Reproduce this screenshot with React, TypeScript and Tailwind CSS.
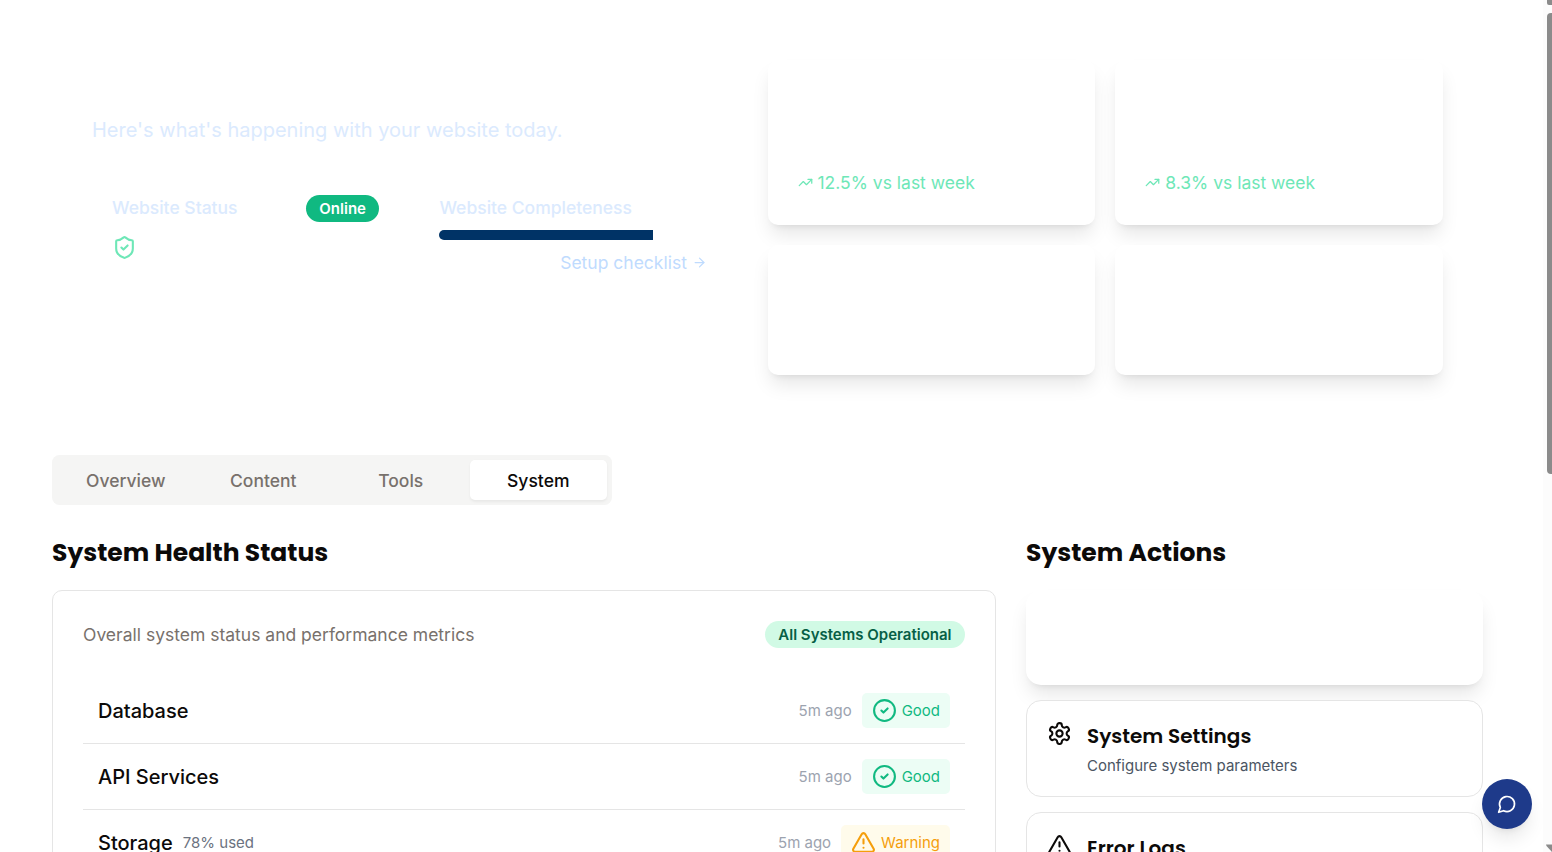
import React from "react";
import {
  ArrowRight,
  CircleCheck,
  ShieldCheck,
  TrendingUp,
  TriangleAlert,
} from "lucide-react";

const tabs = ["Overview", "Content", "Tools", "System"];

const stats = [
  { id: "a", trend: "12.5% vs last week" },
  { id: "b", trend: "8.3% vs last week" },
  { id: "c", trend: null },
  { id: "d", trend: null },
];

const services = [
  { name: "Database", note: "", ok: true },
  { name: "API Services", note: "", ok: true },
  { name: "Storage", note: "78% used", ok: false },
];

const display = "font-['Poppins','Inter',sans-serif]";

function GearIcon() {
  return (
    <svg
      className="size-[25px] shrink-0 text-[#0c0a09]"
      viewBox="0 0 24 24"
      fill="none"
      stroke="currentColor"
      strokeWidth="2"
      strokeLinecap="round"
      strokeLinejoin="round"
    >
      <path d="M12.22 2h-.44a2 2 0 0 0-2 2v.18a2 2 0 0 1-1 1.73l-.43.25a2 2 0 0 1-2 0l-.15-.08a2 2 0 0 0-2.73.73l-.22.38a2 2 0 0 0 .73 2.73l.15.1a2 2 0 0 1 1 1.72v.51a2 2 0 0 1-1 1.74l-.15.09a2 2 0 0 0-.73 2.73l.22.38a2 2 0 0 0 2.73.73l.15-.08a2 2 0 0 1 2 0l.43.25a2 2 0 0 1 1 1.73V20a2 2 0 0 0 2 2h.44a2 2 0 0 0 2-2v-.18a2 2 0 0 1 1-1.73l.43-.25a2 2 0 0 1 2 0l.15.08a2 2 0 0 0 2.73-.73l.22-.39a2 2 0 0 0-.73-2.73l-.15-.08a2 2 0 0 1-1-1.74v-.5a2 2 0 0 1 1-1.74l.15-.09a2 2 0 0 0 .73-2.73l-.22-.38a2 2 0 0 0-2.73-.73l-.15.08a2 2 0 0 1-2 0l-.43-.25a2 2 0 0 1-1-1.73V4a2 2 0 0 0-2-2z" />
      <circle cx="12" cy="12" r="3" />
    </svg>
  );
}

function ChatIcon() {
  return (
    <svg
      className="size-5"
      viewBox="0 0 24 24"
      fill="none"
      stroke="currentColor"
      strokeWidth="2"
      strokeLinecap="round"
      strokeLinejoin="round"
    >
      <path d="M7.9 20A9 9 0 1 0 4 16.1L2 22Z" />
    </svg>
  );
}

function Hero() {
  return (
    <section className="flex h-[395px] px-10 pt-10">
      <div className="w-1/2 pr-[40.6px] pt-[55px]">
        <p className="text-[20px] leading-[30px] text-[#dbeafe]">
          Here's what's happening with your website today.
        </p>
        <div className="mt-[30px] grid grid-cols-2 gap-5">
          <div className="p-5">
            <div className="flex items-start justify-between">
              <span className="text-[17.5px] font-medium leading-[25px] text-[#dbeafe]">
                Website Status
              </span>
              <span className="rounded-full bg-[#10b981] px-[13.5px] py-[3.5px] text-[15px] font-semibold leading-5 text-white">
                Online
              </span>
            </div>
            <ShieldCheck className="mt-[13px] size-[25px] text-[#6ee7b7]" />
          </div>
          <div className="p-5">
            <div className="text-[17.5px] font-medium leading-[25px] text-[#dbeafe]">
              Website Completeness
            </div>
            <div className="mt-[10px] h-[10px] overflow-hidden rounded-full">
              <div className="h-full w-4/5 bg-[#003366]" />
            </div>
            <div className="mt-[10px] flex items-center justify-end gap-[5px] text-[17.5px] leading-[25px] text-[#bfdbfe]">
              Setup checklist
              <ArrowRight className="size-[15px]" />
            </div>
          </div>
        </div>
      </div>
      <div className="grid w-1/2 grid-cols-2 grid-rows-[165px_130px] gap-5">
        {stats.map((s) => (
          <div
            key={s.id}
            className="flex flex-col justify-end rounded-[10px] bg-white p-[30px] shadow-[0_12.5px_18.75px_-3.75px_rgba(0,0,0,0.1),0_5px_7.5px_-5px_rgba(0,0,0,0.1)]"
          >
            {s.trend && (
              <div className="flex items-center gap-[5px] text-[17.5px] leading-[25px] text-[#6ee7b7]">
                <TrendingUp className="size-[15px]" />
                {s.trend}
              </div>
            )}
          </div>
        ))}
      </div>
    </section>
  );
}

function Tabs() {
  return (
    <div className="mt-10 grid h-[50px] w-[560px] grid-cols-4 rounded-[7.5px] bg-[#f5f5f4] p-[5px]">
      {tabs.map((t) => (
        <button
          key={t}
          className={
            t === "System"
              ? "rounded-[5px] bg-white text-[17.5px] font-medium leading-[25px] text-[#0c0a09] shadow-[0_1.25px_2.5px_rgba(0,0,0,0.05)]"
              : "rounded-[5px] text-[17.5px] font-medium leading-[25px] text-[#78716c]"
          }
        >
          {t}
        </button>
      ))}
    </div>
  );
}

function StatusPill({ ok }: { ok: boolean }) {
  const Icon = ok ? CircleCheck : TriangleAlert;
  return (
    <span
      className={
        ok
          ? "flex items-center gap-[5px] rounded-[5px] bg-[#ecfdf5] px-[10px] py-[5px] text-[#10b981]"
          : "flex items-center gap-[5px] rounded-[5px] bg-[#fffbeb] px-[10px] py-[5px] text-[#f59e0b]"
      }
    >
      <Icon className="size-[25px]" />
      <span className="text-[15px] leading-5">{ok ? "Good" : "Warning"}</span>
    </span>
  );
}

function Health() {
  return (
    <section className="col-span-2">
      <h2 className={`${display} mb-5 text-[25px] font-bold leading-[35px] text-[#0c0a09]`}>
        System Health Status
      </h2>
      <div className="rounded-[10px] border border-[#e5e5e5] bg-white p-[30px]">
        <div className="mb-[30px] flex h-[27px] items-center justify-between">
          <p className="text-[17.5px] leading-[25px] text-[#78716c]">
            Overall system status and performance metrics
          </p>
          <span className="rounded-full bg-[#d1fae5] px-[13.5px] py-[3.5px] text-[15px] font-semibold leading-5 text-[#065f46]">
            All Systems Operational
          </span>
        </div>
        {services.map((s) => (
          <div
            key={s.name}
            className="flex items-center justify-between border-b border-[#e5e5e5] p-[15px]"
          >
            <div className="flex items-center gap-[10px]">
              <span className="text-[20px] font-medium leading-[30px] text-[#0c0a09]">
                {s.name}
              </span>
              {s.note && (
                <span className="text-[15px] leading-5 text-[#6b7280]">{s.note}</span>
              )}
            </div>
            <div className="flex items-center gap-[10px]">
              <span className="text-[15px] leading-5 text-[#9ca3af]">5m ago</span>
              <StatusPill ok={s.ok} />
            </div>
          </div>
        ))}
      </div>
    </section>
  );
}

function Action({
  icon,
  title,
  text,
}: {
  icon: React.ReactNode;
  title: string;
  text: string;
}) {
  return (
    <div className="flex items-start gap-[15px] rounded-[15px] border border-[#e5e5e5] bg-white p-5">
      {icon}
      <div>
        <h3 className={`${display} text-[20px] font-semibold leading-[30px] text-[#0c0a09]`}>
          {title}
        </h3>
        <p className="mt-[5px] text-[15px] leading-5 text-[#4b5563]">{text}</p>
      </div>
    </div>
  );
}

function Actions() {
  return (
    <section>
      <h2 className={`${display} mb-5 text-[25px] font-bold leading-[35px] text-[#0c0a09]`}>
        System Actions
      </h2>
      <div className="flex flex-col gap-[15px]">
        <div className="h-[95px] rounded-[15px] bg-white shadow-[0_12.5px_18.75px_-3.75px_rgba(0,0,0,0.1),0_5px_7.5px_-5px_rgba(0,0,0,0.1)]" />
        <Action
          icon={<GearIcon />}
          title="System Settings"
          text="Configure system parameters"
        />
        <Action
          icon={<TriangleAlert className="size-[25px] text-[#0c0a09]" />}
          title="Error Logs"
          text="View system errors"
        />
      </div>
    </section>
  );
}

export default function App() {
  return (
    <div className="relative h-[852px] w-full overflow-hidden bg-white font-['Inter',sans-serif]">
      <main className="ml-[52px] w-[1431px] pt-5">
        <Hero />
        <Tabs />
        <div className="mt-[30px] grid grid-cols-3 gap-[30px]">
          <Health />
          <Actions />
        </div>
      </main>
      <button className="absolute bottom-[23px] right-5 flex size-[50px] items-center justify-center rounded-full bg-[#1e3a8a] text-white shadow-[0_12.5px_18.75px_-3.75px_rgba(0,0,0,0.1),0_5px_7.5px_-5px_rgba(0,0,0,0.1)]">
        <ChatIcon />
      </button>
      <div className="absolute right-0 top-0 flex h-full w-[9px] flex-col items-end bg-[#fcfcfc]">
        <div className="h-[5px] w-[5px] rounded-bl-[2px] bg-[#8b8b8b]" />
        <div className="mt-[8px] h-[461px] w-[5px] rounded-l-[4px] bg-[#8b8b8b]" />
        <svg className="mt-auto h-[8px] w-[6px]" viewBox="0 0 6 8">
          <path d="M0 0.5H6V8L0.5 2Z" fill="#8b8b8b" />
        </svg>
      </div>
    </div>
  );
}
